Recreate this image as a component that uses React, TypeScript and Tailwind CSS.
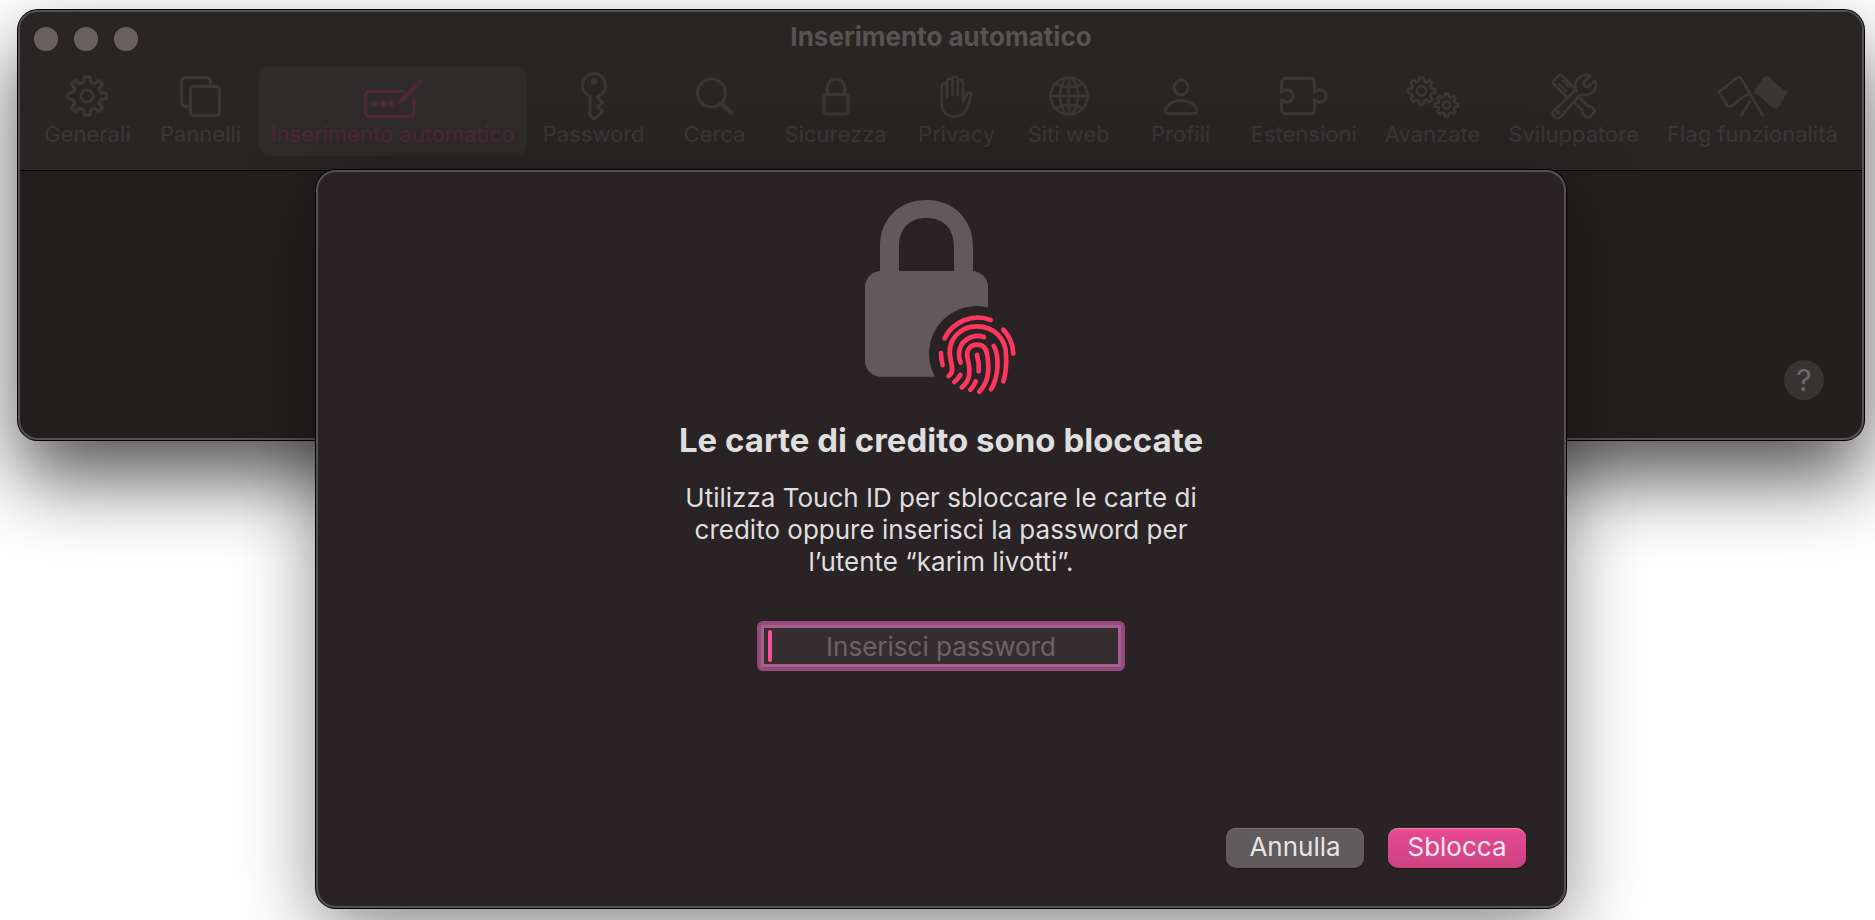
import type { ReactNode } from "react";

function gearPath(cx: number, cy: number, outer: number, inner: number) {
  const teeth = 8;
  const points: string[] = [];
  const at = (r: number, deg: number) => {
    const a = (deg * Math.PI) / 180;
    return `${(cx + r * Math.cos(a)).toFixed(2)} ${(cy + r * Math.sin(a)).toFixed(2)}`;
  };
  for (let i = 0; i < teeth; i++) {
    const mid = (i * 360) / teeth;
    points.push(at(inner, mid - 14), at(outer, mid - 8.5), at(outer, mid + 8.5));
    points.push(at(inner, mid + 14));
  }
  return `M${points.join("L")}Z`;
}

function Icon({ width, children }: { width: number; children: ReactNode }) {
  return (
    <svg
      width={width}
      height="48"
      viewBox={`0 0 ${width} 48`}
      fill="none"
      stroke="currentColor"
      strokeWidth="3"
      strokeLinecap="round"
      strokeLinejoin="round"
      aria-hidden="true"
    >
      {children}
    </svg>
  );
}

const GearIcon = () => (
  <Icon width={44}>
    <path d={gearPath(22, 24, 19.5, 14.2)} />
    <circle cx="22" cy="24" r="6" />
  </Icon>
);

const PanelsIcon = () => (
  <Icon width={44}>
    <path d="M10.500 34.500H7a4.500 4.500 0 0 1-4.500-4.500V10A4.500 4.500 0 0 1 7 5.500h20a4.500 4.500 0 0 1 4.500 4.500v4" />
    <rect x="11.500" y="14.500" width="29" height="29" rx="4" />
  </Icon>
);

const AutofillIcon = () => (
  <Icon width={60}>
    <path d="M41 19.500H6.500a4 4 0 0 0-4 4v17a4 4 0 0 0 4 4h40.500a4 4 0 0 0 4-4V25.500" strokeLinecap="butt" />
    <g fill="currentColor" stroke="none">
      <circle cx="11.500" cy="31.500" r="2.900" />
      <circle cx="20" cy="31.500" r="2.900" />
      <circle cx="28.500" cy="31.500" r="2.900" />
      <path d="M34.500 32.500l3-6.500 15-14.500 3 3-15 14.800z" />
      <path d="M54 10l2.200-2.200a2.100 2.100 0 0 1 3 3L57 13z" />
    </g>
  </Icon>
);

const KeyIcon = () => (
  <Icon width={28}>
    <path d="M10 24.200A11.600 11.600 0 1 1 18 24.200V26l4.500 4.500-4.500 4.500 4.500 4.800L14 47l-4-3.500Z" />
    <circle cx="14" cy="9.500" r="3.200" fill="currentColor" stroke="none" />
  </Icon>
);

const SearchIcon = () => (
  <Icon width={40}>
    <circle cx="16.500" cy="21" r="14" />
    <path d="M27.500 32L36.500 41" strokeWidth="4.500" />
  </Icon>
);

const LockIcon = () => (
  <Icon width={30}>
    <rect x="3" y="22.500" width="24" height="19.500" rx="2.500" />
    <path d="M6.500 22V15.500a8.500 8.500 0 0 1 17 0V22" />
  </Icon>
);

const HandIcon = () => (
  <Icon width={36}>
    <g strokeWidth="2.600">
      <path d="M8 24V14a2.600 2.600 0 0 0-5.200 0V31c0 9 5.200 13.500 12.700 13.500 8 0 11.500-4.500 13.500-11l3-9.500c1-3.500-2.800-4.800-4.200-1.800L24 29.500V10.500a2.600 2.600 0 0 0-5.200 0" />
      <path d="M8 25V9.500a2.700 2.700 0 0 1 5.400 0V22.500" />
      <path d="M13.400 10V7.500a2.700 2.700 0 0 1 5.400 0V23" />
    </g>
  </Icon>
);

const GlobeIcon = () => (
  <Icon width={42}>
    <g strokeWidth="2.600">
      <circle cx="21" cy="24" r="18.500" />
      <ellipse cx="21" cy="24" rx="9" ry="18.500" />
      <path d="M21 5.500v37M2.500 24h37" />
      <path d="M8 11.500c6.500 5 19.500 5 26 0M8 36.500c6.500-5 19.500-5 26 0" />
    </g>
  </Icon>
);

const ProfileIcon = () => (
  <Icon width={38}>
    <ellipse cx="19" cy="15.500" rx="6.900" ry="7.500" />
    <path d="M6.500 41.500h25c3 0 3.800-1.800 3-4C32.500 32 26.500 28.500 19 28.500S5.500 32 3.500 37.500c-.8 2.200 0 4 3 4z" />
  </Icon>
);

const PuzzleIcon = () => (
  <Icon width={50}>
    <path d="M6.500 6.500h25a4 4 0 0 1 4 4v10c1.500 0 1.500-2.800 5.300-2.800a6.300 6.300 0 0 1 0 12.600c-3.800 0-3.800-2.800-5.300-2.800v10a4 4 0 0 1-4 4h-25a4 4 0 0 1-4-4v-10c1.500 0 1.500 2.800 5.300 2.800a6.300 6.300 0 0 0 0-12.600c-3.800 0-3.800 2.800-5.300 2.800v-10a4 4 0 0 1 4-4z" />
  </Icon>
);

const GearsIcon = () => (
  <Icon width={56}>
    <g strokeWidth="2.600">
      <path d={gearPath(16.5, 19, 13.7, 10.2)} />
      <circle cx="16.500" cy="19" r="4.700" />
      <path d={gearPath(41.5, 33, 11.5, 8.6)} />
      <circle cx="41.500" cy="33" r="3.500" />
    </g>
  </Icon>
);

const ToolsIcon = () => (
  <Icon width={50}>
    <g strokeWidth="2.800">
      <path d="M19.500 26.500L4.200 11.500V9.500L9.200 4c1.500-1.300 3-1 4.300.3L28 19" />
      <path d="M9.500 11.500L17 19M13.500 8.500L20.500 15.500" strokeWidth="2" />
      <path d="M25.500 30.500l8 8v3l4.500 3.800 2.200 0 5.300-5.300v-2L41.500 34h-3l-8-8" />
      <path d="M41.500 3.500C36 1.500 27 4.500 26.500 13c0 2 .8 4 .3 5L5 38.500c-2 2.500-1.200 5 .5 6.500 2 1.800 4.500 1.500 6.500-.5L31 22.800c1.500-.8 3.500.4 6.500 0C44.500 22 49 15 46 8.500l-7 6.500-4-1.500-.5-3z" />
      <circle cx="9.500" cy="40.500" r="2.200" fill="currentColor" stroke="none" />
    </g>
  </Icon>
);

const FlagsIcon = () => (
  <Icon width={72}>
    <g strokeWidth="2.800">
      <path d="M46.500 43L25.500 7c-1-1.500-2.500-1.900-4.500-.9C13 10 11.500 16 2.500 19.500l8.500 13.500c1.200 1.700 2.500 1.800 4 1.200C22 31.500 24 24.500 32.500 22.500" />
      <path d="M25.500 43L33.500 30" />
      <path
        d="M39.500 20.500L48 7c1-1.500 2.500-1.500 4-.7C59 10 60.500 17.500 70 19.500L62 33.500c-1 1.500-2.500 1.500-4 1C50.500 32 49 23 39.500 20.500z"
        fill="currentColor"
      />
    </g>
  </Icon>
);

const tabs = [
  { label: "Generali", icon: GearIcon },
  { label: "Pannelli", icon: PanelsIcon },
  { label: "Inserimento automatico", icon: AutofillIcon, active: true },
  { label: "Password", icon: KeyIcon },
  { label: "Cerca", icon: SearchIcon },
  { label: "Sicurezza", icon: LockIcon },
  { label: "Privacy", icon: HandIcon },
  { label: "Siti web", icon: GlobeIcon },
  { label: "Profili", icon: ProfileIcon },
  { label: "Estensioni", icon: PuzzleIcon },
  { label: "Avanzate", icon: GearsIcon },
  { label: "Sviluppatore", icon: ToolsIcon },
  { label: "Flag funzionalità", icon: FlagsIcon },
];

function LockedArtwork() {
  return (
    <svg width="152" height="196" viewBox="75 57 456 588" fill="none" aria-hidden="true">
      <mask id="badge-cutout">
        <rect x="75" y="57" width="456" height="588" fill="white" />
        <circle cx="410" cy="521" r="143" fill="black" />
      </mask>
      <g mask="url(#badge-cutout)">
        <path
          d="M120 290V200C120 115 180 60 259 60S399 115 399 200V290H342V200C342 145 310 114 259 114S177 145 177 200V290Z"
          fill="#605a5c"
        />
        <rect x="75" y="273" width="369" height="317" rx="48" fill="#605a5c" />
      </g>
      <g stroke="#ff375f" strokeWidth="14" strokeLinecap="round" strokeLinejoin="round">
        <path d="M314 475A110 110 0 0 1 452 420" />
        <path d="M490 449A112 112 0 0 1 520 521" />
        <path d="M303 519Q303 538 308 555" />
        <path d="M326 588C342 576 336 560 332 540C318 475 365 439 411 439C462 439 498 476 498 525C500 555 498 580 490 604" />
        <path d="M432 471C395 458 357 485 357 522Q357 536 362 548" />
        <path d="M461 498C478 525 477 590 453 628" />
        <path d="M365 622C392 602 391 573 384 540C375 510 391 494 411 494C431 494 440 508 442 528C449 575 445 605 418 635" />
        <path d="M411 525Q418 550 416 574" />
        <path d="M361 585Q354 597 343 606" />
        <path d="M407 604Q401 620 391 629" />
      </g>
    </svg>
  );
}

export default function App() {
  return (
    <div className="min-h-screen overflow-hidden bg-white pt-[10px] pr-[11px] pb-[12px] pl-[18px] font-[Inter,sans-serif]">
      <main className="relative h-[898px]">
        <section className="flex h-[430px] flex-col overflow-hidden rounded-[20px] border-2 border-[#565253] bg-[#231f1e] shadow-[0_0_0_1px_#000,0_38px_78px_rgba(0,0,0,0.67)]">
          <header className="border-b border-black bg-[#282524] pb-[14px]">
            <div className="grid h-[54px] grid-cols-[1fr_auto_1fr] items-center px-[14px]">
              <div className="flex gap-4">
                <button type="button" aria-label="Chiudi" className="size-6 rounded-full bg-[#686061]" />
                <button type="button" aria-label="Riduci" className="size-6 rounded-full bg-[#686061]" />
                <button type="button" aria-label="Ingrandisci" className="size-6 rounded-full bg-[#686061]" />
              </div>
              <h1 className="pb-1 text-[26px] leading-8 font-bold text-[#575352]">Inserimento automatico</h1>
            </div>
            <nav className="flex justify-center gap-1">
              {tabs.map(({ label, icon: TabIcon, active }) => (
                <button
                  key={label}
                  type="button"
                  aria-current={active ? "page" : undefined}
                  className={
                    active
                      ? "flex min-w-[108px] flex-col items-center rounded-xl bg-[#2e2b2a] px-3 pt-[6px] pb-2 text-[#502639]"
                      : "flex min-w-[108px] flex-col items-center rounded-xl px-3 pt-[6px] pb-2 text-[#393736]"
                  }
                >
                  <TabIcon />
                  <span className="text-[22px] leading-7 whitespace-nowrap">{label}</span>
                </button>
              ))}
            </nav>
          </header>
          <div className="flex flex-1 items-end justify-end pr-[38px] pb-[38px]">
            <button
              type="button"
              aria-label="Aiuto"
              className="size-10 rounded-full bg-[#373333] text-[30px] leading-10 text-[#6f6b6b]"
            >
              ?
            </button>
          </div>
        </section>

        <div className="absolute inset-x-0 top-[160px] flex justify-center">
          <form
            role="dialog"
            aria-labelledby="dialog-title"
            onSubmit={(event) => event.preventDefault()}
            className="flex h-[738px] w-[1250px] max-w-full flex-col items-center rounded-[20px] border-2 border-[#565253] bg-[#292325] pt-[27px] shadow-[0_0_0_1px_#000,0_24px_78px_rgba(0,0,0,0.46)]"
          >
            <LockedArtwork />
            <h2 id="dialog-title" className="mt-[23px] text-[33px] leading-[44px] font-bold text-[#dfdedf]">
              Le carte di credito sono bloccate
            </h2>
            <p className="mt-[20px] w-[520px] text-center text-[26px] leading-8 text-[#dfdedf]">
              Utilizza Touch ID per sbloccare le carte di credito oppure inserisci la password per l’utente “karim
              livotti”.
            </p>
            <div className="relative mt-[43px] rounded-md border-4 border-[#944b7c]">
              <input
                type="password"
                aria-label="Password"
                placeholder="Inserisci password"
                className="block h-[42px] w-[360px] border-3 border-[#a9608f] bg-[#352e31] text-center text-[26px] text-[#dfdedf] caret-[#ff4f9b] outline-none placeholder:text-[#6a6466]"
              />
              <span className="absolute top-[5px] left-[7px] h-8 w-1 rounded-full bg-[#ff4f9b]" />
            </div>
            <div className="mt-auto flex gap-6 self-end pr-[38px] pb-[38px]">
              <button
                type="button"
                className="h-10 w-[138px] rounded-[10px] bg-[#605b5c] pb-[2px] text-[26px] leading-8 text-[#e6e5e5] shadow-[inset_0_1px_0_#7a7677,0_1px_1px_rgba(0,0,0,0.35)]"
              >
                Annulla
              </button>
              <button
                type="submit"
                className="h-10 w-[138px] rounded-[10px] bg-linear-to-b from-[#e94b92] to-[#cc427f] pb-[2px] text-[26px] leading-8 text-[#fce6f0] shadow-[inset_0_1px_0_#f084b2,0_1px_1px_rgba(0,0,0,0.35)]"
              >
                Sblocca
              </button>
            </div>
          </form>
        </div>
      </main>
    </div>
  );
}
